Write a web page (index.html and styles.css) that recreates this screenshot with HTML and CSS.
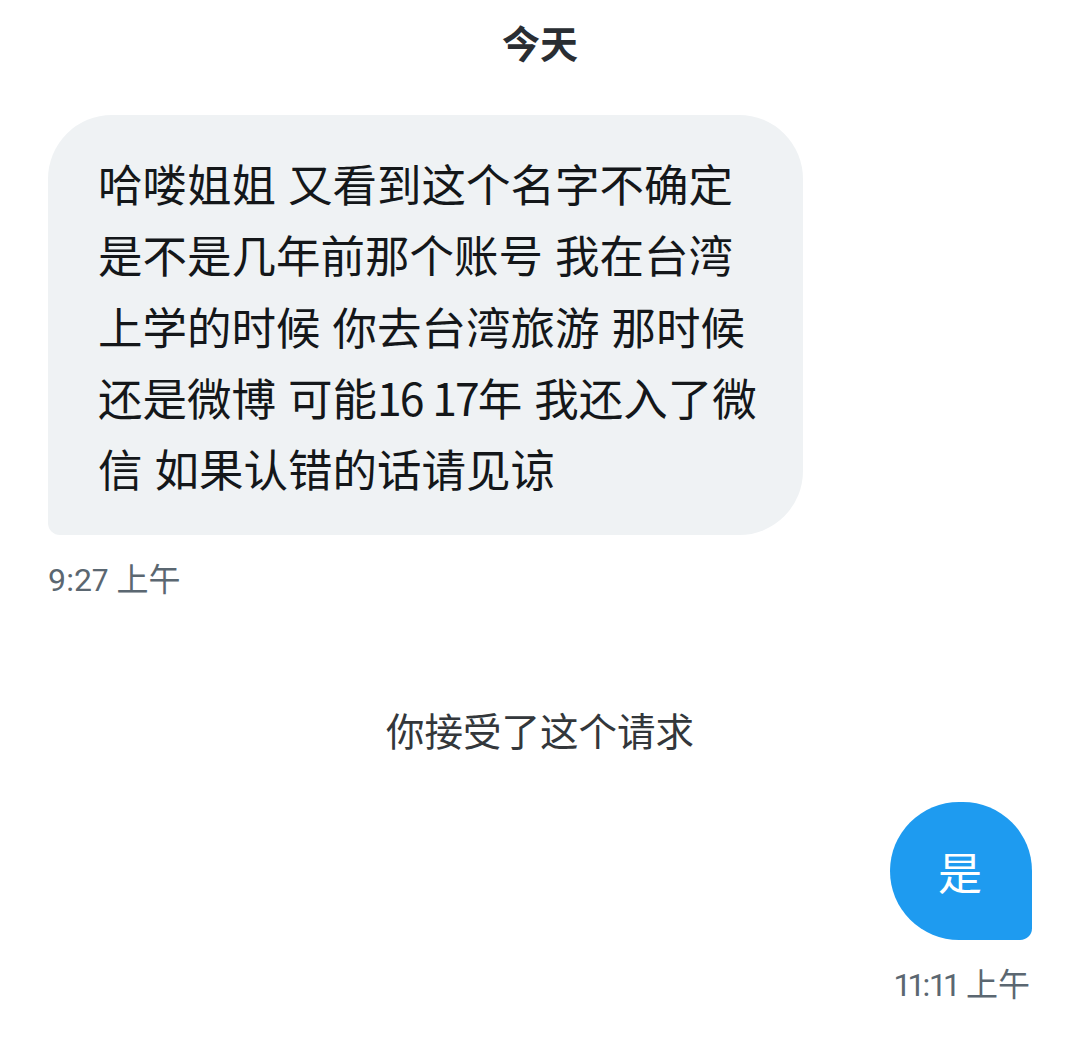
FILE: index.html
```html
<!DOCTYPE html>
<html lang="zh-CN">
<head>
<meta charset="utf-8">
<title>Messages</title>
<link rel="stylesheet" href="styles.css">
</head>
<body>
<main class="thread">
  <div class="day">今天</div>
  <div class="msg in">
    <div class="bubble gray">哈喽姐姐 又看到这个名字不确定<br>是不是几年前那个账号 我在台湾<br>上学的时候 你去台湾旅游 那时候<br>还是微博 可能<span class="num">16 17</span>年 我还入了微<br>信 如果认错的话请见谅</div>
    <div class="time">9:27 上午</div>
  </div>
  <div class="notice">你接受了这个请求</div>
  <div class="msg out">
    <div class="bubble blue">是</div>
    <div class="time">11:11 上午</div>
  </div>
</main>
</body>
</html>
```

FILE: styles.css
```css
html, body {
  margin: 0;
  padding: 0;
  background: #ffffff;
}
body {
  font-family: "Roboto", "Noto Sans CJK SC", sans-serif;
  color: #0f1419;
}
.thread {
  display: flex;
  flex-direction: column;
  padding: 0 48px;
}
.day {
  text-align: center;
  font-size: 38px;
  font-weight: 700;
  line-height: 50px;
  margin-top: 20px;
  color: #2a2e33;
}
.msg {
  display: flex;
  flex-direction: column;
}
.msg.in {
  align-items: flex-start;
  margin-top: 45px;
}
.msg.out {
  align-items: flex-end;
  margin-top: 44px;
}
.bubble {
  box-sizing: border-box;
}
.bubble.gray {
  width: 755px;
  background: #eff2f4;
  font-family: "Noto Sans CJK SC", sans-serif;
  font-size: 44.5px;
  line-height: 71.25px;
  word-spacing: 2px;
  padding: 32px 30px 32px 50px;
  border-radius: 64px 64px 64px 12px;
  color: #14171a;
}
.num {
  letter-spacing: -2px;
}
.bubble.blue {
  width: 142px;
  height: 138px;
  background: #1e9bf0;
  color: #ffffff;
  font-family: "Noto Sans CJK SC", sans-serif;
  font-size: 44px;
  display: flex;
  align-items: center;
  justify-content: center;
  border-radius: 70px 70px 12px 70px;
  padding-right: 2px;
}
.time {
  font-size: 32px;
  line-height: 36px;
  color: #5b6771;
  margin-top: 27px;
  font-variant-numeric: proportional-nums;
}
.msg.out .time {
  margin-right: 2px;
}
.notice {
  text-align: center;
  font-size: 38.5px;
  line-height: 50px;
  margin-top: 110px;
  color: #33373b;
}
```
